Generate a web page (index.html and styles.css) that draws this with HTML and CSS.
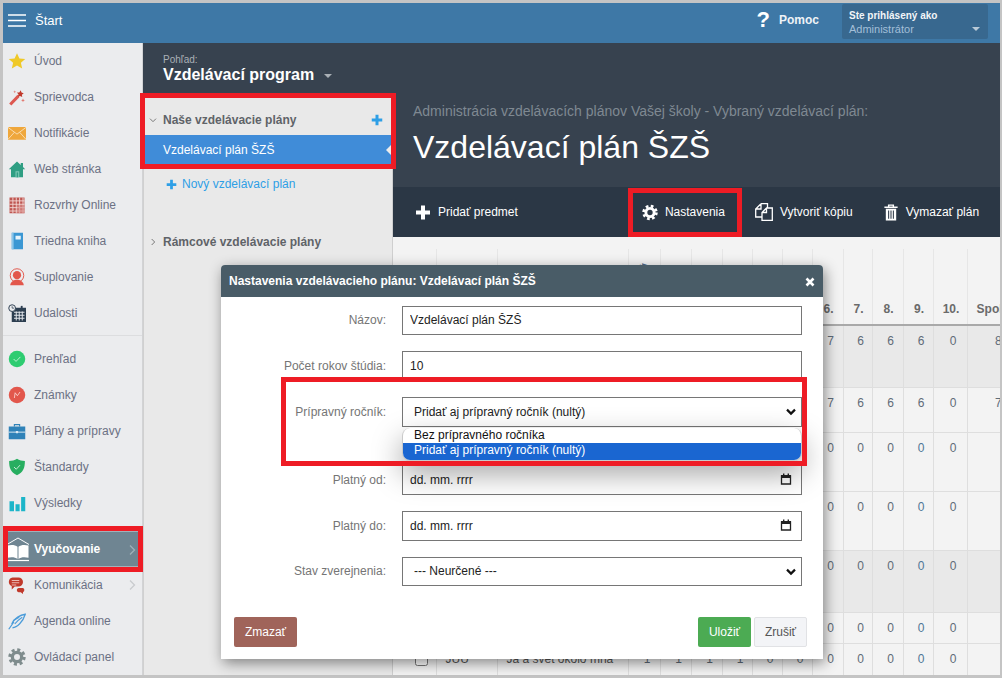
FILE: index.html
```html
<!DOCTYPE html>
<html lang="sk">
<head>
  <meta charset="UTF-8" />
  <meta name="viewport" content="width=device-width, initial-scale=1.0"/>
  <title>Vzdelávací plán ŠZŠ</title>
  <link rel="stylesheet" href="styles.css">
</head>
<body>

<svg class="defs" aria-hidden="true">
  <symbol id="gear" viewBox="0 0 24 24">
    <circle cx="12" cy="12" r="9.6" fill="none" stroke="currentColor" stroke-width="4" stroke-dasharray="4 3.54"/>
    <circle cx="12" cy="12" r="6.2" fill="none" stroke="currentColor" stroke-width="4.4"/>
  </symbol>
  <symbol id="plus" viewBox="0 0 16 16">
    <path d="M6 1h4v5h5v4h-5v5H6v-5H1V6h5z" fill="currentColor"/>
  </symbol>
  <symbol id="chev-right" viewBox="0 0 8 12">
    <path d="M2 1.5 6.5 6 2 10.5" fill="none" stroke="currentColor" stroke-width="1.3"/>
  </symbol>
  <symbol id="chev-down" viewBox="0 0 12 8">
    <path d="M1.5 2 6 6.5 10.5 2" fill="none" stroke="currentColor" stroke-width="1.3"/>
  </symbol>
  <symbol id="select-arrow" viewBox="0 0 10 8">
    <path d="M1 1.6 5 5.6 9 1.6" fill="none" stroke="#111" stroke-width="2.2"/>
  </symbol>
  <symbol id="date-icon" viewBox="0 0 12 12">
    <path d="M1.5 3h9v8h-9z" fill="none" stroke="#222" stroke-width="1.3"/>
    <path d="M1 2h10v3H1zM3 .5h1.4V2H3zM7.6 .5H9V2H7.6z" fill="#222"/>
  </symbol>
</svg>

<div class="shell">
  <header class="topbar">
    <div class="brand">
      <svg class="burger" viewBox="0 0 18 13"><path d="M0 1h18M0 6.5h18M0 12h18" stroke="#fff" stroke-width="1.5"/></svg>
      <span>Štart</span>
    </div>
    <div class="help"><span class="help-mark">?</span><span>Pomoc</span></div>
    <div class="account">
      <div class="account-label">Ste prihlásený ako</div>
      <div class="account-role">Administrátor</div>
      <span class="account-caret"></span>
    </div>
  </header>

  <div class="workspace">
    <nav class="sidebar">
      <ul class="nav-group">
        <li class="nav-item">
          <svg class="nav-icon" viewBox="0 0 24 24"><path d="M12 1.5l3.2 7 7.8.8-5.8 5.1 1.7 7.6-6.900-4-6.900 4 1.700-7.600L1 9.300l7.800-.8z" fill="#efc928"/></svg>
          Úvod
        </li>
        <li class="nav-item">
          <svg class="nav-icon" viewBox="0 0 24 24"><path d="M3 22 14 10.500" stroke="#dd5850" stroke-width="4"/><path d="M17 3l1 3 3 1-2.500 2 .5 3-3-1.500-3 1 1-3-2-2.500 3 0z" fill="#c0392b"/><path d="M20 14l.7 1.800 1.800.7-1.800.7-.7 1.800-.7-1.800-1.800-.7 1.800-.7zM9 3l.5 1.500L11 5l-1.500.5L9 7l-.5-1.500L7 5l1.500-.5z" fill="#e2786f"/></svg>
          Sprievodca
        </li>
        <li class="nav-item">
          <svg class="nav-icon" viewBox="0 0 24 24"><path d="M0 4h24v17H0z" fill="#efa73c"/><path d="M0 4.500l12 9 12-9M0 20.500l8.500-9.500M24 20.500l-8.500-9.500" fill="none" stroke="#fbe6c4" stroke-width="1.100"/></svg>
          Notifikácie
        </li>
        <li class="nav-item">
          <svg class="nav-icon" viewBox="0 0 24 24"><path d="M12 2l5 4.500V4h3v5.200l3 3h-3V23H4V12.200H1z" fill="#2f9e83"/><path d="M10 15h5v8h-5z" fill="#7cc7b4"/><path d="M11.500 16.500h2V23h-2z" fill="#2f9e83"/></svg>
          Web stránka
        </li>
        <li class="nav-item">
          <svg class="nav-icon" viewBox="0 0 24 24"><path d="M2 2h20v21H2z" fill="#bf5651"/><path d="M2 6.500h20M2 11h20M2 15.500h20M2 20h20M6.500 2v21M11 2v21M15.500 2v21M20 2v21" stroke="#f3d9d6" stroke-width="1.200"/><path d="M12 12h10v11H12z" fill="#d9908c" opacity=".6"/></svg>
          Rozvrhy Online
        </li>
        <li class="nav-item">
          <svg class="nav-icon" viewBox="0 0 24 24"><path d="M5 1h15v22H5z" fill="#3b97d3"/><path d="M5 1h2.500v22H5z" fill="#8cc6ea"/><path d="M10 5h7v5h-7z" fill="#e8f4fb"/></svg>
          Triedna kniha
        </li>
        <li class="nav-item">
          <svg class="nav-icon" viewBox="0 0 24 24"><circle cx="12" cy="10" r="9" fill="none" stroke="#e2574c" stroke-width="1.300"/><circle cx="12" cy="9.500" r="5.500" fill="#e2574c"/><path d="M3 23c0-5 5-7.500 9-7.500s9 2.500 9 7.500z" fill="#e2574c"/></svg>
          Suplovanie
        </li>
        <li class="nav-item">
          <svg class="nav-icon" viewBox="0 0 24 24"><path d="M5 5h19v19H5z" fill="#2c3e50"/><path d="M8 11h14M8 15h14M8 19h14M11 10v12M15 10v12M19 10v12" stroke="#e4e8ec" stroke-width="1.300"/><path d="M17 2.500h2.500V6H17z" fill="#2c3e50"/><circle cx="5.500" cy="5.500" r="4.500" fill="#ebecee" stroke="#2c3e50" stroke-width="1.300"/><path d="M5.500 3v2.500H8" fill="none" stroke="#2c3e50"/></svg>
          Udalosti
        </li>
      </ul>
      <ul class="nav-group">
        <li class="nav-item">
          <svg class="nav-icon" viewBox="0 0 24 24"><circle cx="12" cy="12" r="11" fill="#2ecc71"/><path d="M7.500 12l3.200 3.200 5.800-6" fill="none" stroke="#c9f3da" stroke-width="1.200"/></svg>
          Prehľad
        </li>
        <li class="nav-item">
          <svg class="nav-icon" viewBox="0 0 24 24"><circle cx="12" cy="12" r="11" fill="#e2574c"/><path d="M8.500 16l1-7 3 4 3.500-5" fill="none" stroke="#f8cfcb" stroke-width="1.200"/></svg>
          Známky
        </li>
        <li class="nav-item">
          <svg class="nav-icon" viewBox="0 0 24 24"><path d="M1 6h22v17H1z" fill="#2f82b8"/><path d="M8.500 6V3.500h7V6" fill="none" stroke="#2f82b8" stroke-width="1.500"/><path d="M1 13.500h22" stroke="#dbe9f3" stroke-width="1.300"/><path d="M10.500 12h3v3h-3z" fill="#dbe9f3"/></svg>
          Plány a prípravy
        </li>
        <li class="nav-item">
          <svg class="nav-icon" viewBox="0 0 24 24"><path d="M12 1c3 2 7 3 10.500 3 0 9-2 15-10.500 19C3.500 19 1.500 13 1.500 4 5 4 9 3 12 1z" fill="#27ae60"/><path d="M8 12l3 3 5-5.500" fill="none" stroke="#d2f1df" stroke-width="1.200"/></svg>
          Štandardy
        </li>
        <li class="nav-item">
          <svg class="nav-icon" viewBox="0 0 24 24"><path d="M2 9.500h6V23H2zM10 13.500h5.500V23H10zM17.500 4H23v19h-5.500z" fill="#1cb5c9"/></svg>
          Výsledky
        </li>
      </ul>
      <ul class="nav-group">
        <li class="nav-item nav-item-active">
          <svg class="nav-icon nav-icon-book" viewBox="0 0 22 25"><path d="M0 7.500 11 1l11 6.500" fill="none" stroke="#fff" stroke-width="1"/><path d="M.5 8.500c4-1 8-.5 10 1.200V22c-2-1.700-6-2.200-10-1.200zM21.500 8.500c-4-1-8-.5-10 1.200V22c2-1.700 6-2.200 10-1.200z" fill="#fff"/><path d="M0 23.500h22" stroke="#fff" stroke-width="1.200"/></svg>
          Vyučovanie
          <svg class="nav-arrow"><use href="#chev-right"/></svg>
        </li>
        <li class="nav-item">
          <svg class="nav-icon" viewBox="0 0 24 24"><path d="M6 2h8a6 6 0 0 1 0 12H9l-4 4v-4.500A6 6 0 0 1 6 2z" fill="#c0392b"/><path d="M5 6h10M5 9h10M5 12h6" stroke="#f3d3cf" stroke-width="1.100"/><path d="M14 16h6a3 3 0 0 1 0 5.500V24l-3-2.500h-3a2.800 2.800 0 0 1 0-5.500z" fill="#c0392b"/></svg>
          Komunikácia
          <svg class="nav-arrow nav-arrow-muted"><use href="#chev-right"/></svg>
        </li>
        <li class="nav-item">
          <svg class="nav-icon" viewBox="0 0 24 24"><path d="M1 23 8 13M6 21c6 0 14-8 17-18-6 1-15 5-18 13" fill="none" stroke="#4b9cd9" stroke-width="1.700"/><path d="M9 16c3-4 7-7 10-9M8 11c3-2 5-3 7-4" fill="none" stroke="#4b9cd9" stroke-width="1.500"/></svg>
          Agenda online
        </li>
        <li class="nav-item">
          <svg class="nav-icon nav-icon-gear"><use href="#gear"/></svg>
          Ovládací panel
        </li>
      </ul>
    </nav>

    <aside class="plans">
      <div class="plans-head">
        <div class="plans-kicker">Pohľad:</div>
        <div class="plans-view">Vzdelávací program <span class="plans-caret"></span></div>
      </div>
      <div class="plans-body">
        <div class="plans-title">
          <svg class="plans-chev"><use href="#chev-down"/></svg>
          <span>Naše vzdelávacie plány</span>
          <svg class="plans-add"><use href="#plus"/></svg>
        </div>
        <div class="plans-active">Vzdelávací plán ŠZŠ</div>
        <div class="plans-new"><svg class="plans-new-icon"><use href="#plus"/></svg>Nový vzdelávací plán</div>
        <div class="plans-title plans-title-frame">
          <svg class="plans-chev"><use href="#chev-right"/></svg>
          <span>Rámcové vzdelávacie plány</span>
        </div>
      </div>
    </aside>

    <main class="content">
      <div class="content-head">
        <p class="content-sub">Administrácia vzdelávacích plánov Vašej školy - Vybraný vzdelávací plán:</p>
        <h1 class="content-title">Vzdelávací plán ŠZŠ</h1>
      </div>
      <div class="toolbar">
        <div class="tool tool-first"><svg class="tool-icon"><use href="#plus"/></svg>Pridať predmet</div>
        <div class="tool"><svg class="tool-icon"><use href="#gear"/></svg>Nastavenia</div>
        <div class="tool tool-tight">
          <svg class="tool-icon tool-icon-wide" viewBox="0 0 20 18"><path d="M6 .7.7 6v8H7M6 .7h6.500V5M6 .7V6H.7" fill="none" stroke="#fff" stroke-width="1.300"/><path d="M11.500 5 7 9.500v7.800h10.300V5zM11.500 5v4.500H7" fill="none" stroke="#fff" stroke-width="1.300"/></svg>
          Vytvoriť kópiu
        </div>
        <div class="tool">
          <svg class="tool-icon" viewBox="0 0 16 18"><path d="M1 3.500h14M5.500 3V1.200h5V3" fill="none" stroke="#fff" stroke-width="1.500"/><path d="M2.500 5h11v12.500h-11z" fill="#fff"/><path d="M5.500 7v8.500M8 7v8.500M10.500 7v8.500" stroke="#2b3745" stroke-width="1.100"/></svg>
          Vymazať plán
        </div>
      </div>
      <div class="table-wrap">
        <table class="plan-table">
          <colgroup>
            <col class="col-check"><col class="col-code"><col class="col-name">
            <col class="col-32"><col class="col-31"><col class="col-31"><col class="col-30"><col class="col-30"><col class="col-30">
            <col class="col-31"><col class="col-29"><col class="col-31"><col class="col-30"><col class="col-34"><col class="col-sum">
          </colgroup>
          <thead>
            <tr>
              <th></th><th></th><th></th>
              <th><span class="th-rotated">Prípravný</span></th>
              <th>1.</th><th>2.</th><th>3.</th><th>4.</th><th>5.</th>
              <th>6.</th><th>7.</th><th>8.</th><th>9.</th><th>10.</th><th>Spolu</th>
            </tr>
          </thead>
          <tbody>
            <tr class="row-h62 row-dark">
              <td></td><td></td><td></td><td></td><td></td><td></td><td></td><td></td><td></td>
              <td>7</td><td>6</td><td>6</td><td>6</td><td>0</td><td class="cell-sum">8</td>
            </tr>
            <tr class="row-h45">
              <td></td><td></td><td></td><td></td><td></td><td></td><td></td><td></td><td></td>
              <td>7</td><td>6</td><td>6</td><td>6</td><td>0</td><td class="cell-sum">7</td>
            </tr>
            <tr class="row-h59">
              <td></td><td></td><td></td><td></td><td></td><td></td><td></td><td></td><td></td>
              <td>0</td><td>0</td><td>0</td><td class="num-link">0</td><td>0</td><td></td>
            </tr>
            <tr class="row-h59">
              <td></td><td></td><td></td><td></td><td></td><td></td><td></td><td></td><td></td>
              <td>0</td><td>0</td><td>0</td><td class="num-link">0</td><td>0</td><td></td>
            </tr>
            <tr class="row-h62 row-dark">
              <td></td><td></td><td></td><td></td><td></td><td></td><td></td><td></td><td></td>
              <td>0</td><td>0</td><td>0</td><td class="num-link">0</td><td>0</td><td></td>
            </tr>
            <tr class="row-h31">
              <td></td><td></td><td></td><td></td><td></td><td></td><td></td><td></td><td></td>
              <td>0</td><td>0</td><td>0</td><td class="num-link">0</td><td>0</td><td></td>
            </tr>
            <tr class="row-h32">
              <td class="cell-check"><input type="checkbox" class="row-check"></td>
              <td class="cell-text">JUU</td>
              <td class="cell-text">Ja a svet okolo mňa</td>
              <td>1</td><td>1</td><td>1</td><td>1</td><td>0</td><td>0</td>
              <td>0</td><td>0</td><td>0</td><td class="num-link">0</td><td>0</td><td></td>
            </tr>
          </tbody>
        </table>
      </div>
    </main>
  </div>

  <!-- Settings dialog -->
  <section class="modal">
    <div class="modal-head">
      <span>Nastavenia vzdelávacieho plánu: Vzdelávací plán ŠZŠ</span>
      <svg class="modal-close" viewBox="0 0 10 10"><path d="M1.500 1.500l7 7M8.500 1.500l-7 7" stroke="#fff" stroke-width="2.600"/></svg>
    </div>
    <form class="modal-form">
      <label class="form-label" for="plan-name">Názov:</label>
      <input class="form-field" id="plan-name" type="text" value="Vzdelávací plán ŠZŠ">

      <label class="form-label" for="plan-years">Počet rokov štúdia:</label>
      <input class="form-field" id="plan-years" type="text" value="10">

      <label class="form-label" for="plan-prep">Prípravný ročník:</label>
      <div class="field-box">
        <select class="form-field form-select" id="plan-prep">
          <option>Pridať aj prípravný ročník (nultý)</option>
        </select>
        <svg class="field-icon field-icon-select"><use href="#select-arrow"/></svg>
        <div class="select-popup">
          <div class="select-option">Bez prípravného ročníka</div>
          <div class="select-option select-option-on">Pridať aj prípravný ročník (nultý)</div>
        </div>
      </div>

      <div class="form-spacer"></div>

      <label class="form-label" for="plan-from">Platný od:</label>
      <div class="field-box">
        <input class="form-field" id="plan-from" type="text" value="dd. mm. rrrr">
        <svg class="field-icon"><use href="#date-icon"/></svg>
      </div>

      <label class="form-label" for="plan-to">Platný do:</label>
      <div class="field-box">
        <input class="form-field" id="plan-to" type="text" value="dd. mm. rrrr">
        <svg class="field-icon"><use href="#date-icon"/></svg>
      </div>

      <label class="form-label" for="plan-state">Stav zverejnenia:</label>
      <div class="field-box">
        <select class="form-field form-select" id="plan-state">
          <option>--- Neurčené ---</option>
        </select>
        <svg class="field-icon field-icon-select"><use href="#select-arrow"/></svg>
      </div>
    </form>
    <div class="modal-foot">
      <button class="btn btn-delete" type="button">Zmazať</button>
      <div class="modal-actions">
        <button class="btn btn-save" type="button">Uložiť</button>
        <button class="btn btn-cancel" type="button">Zrušiť</button>
      </div>
    </div>
  </section>

  <!-- Red annotation frames drawn over the screenshot -->
  <div class="mark mark-plans"></div>
  <div class="mark mark-settings"></div>
  <div class="mark mark-nav"></div>
  <div class="mark mark-select"></div>
</div>

</body>
</html>
```

FILE: styles.css
```css
* { box-sizing: border-box; }

html, body {
  margin: 0;
  height: 678px;
  overflow: hidden;
}

body {
  font-family: "Liberation Sans", Arial, sans-serif;
  font-size: 12px;
  background: #c4c4c4;
}

.defs {
  position: absolute;
  width: 0;
  height: 0;
}

.shell {
  position: relative;
  width: 1002px;
  height: 678px;
  padding: 3px 2px 3px 3px;
  display: flex;
  flex-direction: column;
}

/* top bar */
.topbar {
  height: 40px;
  flex: none;
  display: flex;
  align-items: center;
  padding-bottom: 6px;
  background: #3e78a6;
  color: #fff;
}

.brand {
  display: flex;
  align-items: center;
  gap: 9px;
  padding-left: 5px;
  font-size: 13px;
  margin-right: auto;
}

.burger {
  width: 18px;
  height: 13px;
}

.help {
  display: flex;
  align-items: center;
  gap: 9px;
  font-weight: bold;
  margin-right: 23px;
  color: #eef3f7;
}

.help-mark {
  font-size: 22px;
  color: #fff;
}

.account {
  position: relative;
  width: 146px;
  height: 35px;
  margin: 3px 12px 0 0;
  padding: 5px 7px;
  background: #38688f;
  border-radius: 2px;
}

.account-label {
  font-size: 10px;
  font-weight: bold;
  line-height: 13px;
  color: #f2f5f8;
}

.account-role {
  font-size: 11px;
  line-height: 15px;
  color: #a3bfd8;
}

.account-caret {
  position: absolute;
  right: 8px;
  bottom: 8px;
  border: 4px solid transparent;
  border-top: 4px solid #b9cad8;
  border-bottom: 0;
}

/* left navigation */
.workspace {
  flex: 1;
  min-height: 0;
  display: flex;
}

.sidebar {
  width: 140px;
  flex: none;
  background: #ebecee;
  border-right: 1px solid #d2d3d5;
}

.nav-group {
  list-style: none;
  margin: 0;
  padding: 0;
}

.nav-group + .nav-group {
  margin-top: 4px;
  padding-top: 5px;
  border-top: 1px solid #dcdddf;
}

.nav-group:last-child {
  margin-top: 10px;
  padding-top: 0;
  border-top: 0;
}

.nav-item {
  position: relative;
  height: 36px;
  display: flex;
  align-items: center;
  gap: 8px;
  padding-left: 5px;
  color: #6b7184;
}

.nav-icon {
  width: 18px;
  height: 18px;
  flex: none;
}

.nav-icon-gear {
  color: #7f8c8d;
}

.nav-item-active {
  font-weight: bold;
  color: #fff;
  background: #6f8592;
  border-top: 1px solid #a2b1ba;
  border-bottom: 1px solid #a2b1ba;
}

.nav-icon-book {
  width: 22px;
  height: 25px;
  margin: 0 -3px 0 -1px;
}

.nav-arrow {
  position: absolute;
  right: 6px;
  top: 12px;
  width: 8px;
  height: 12px;
  color: #9fb0ba;
}

.nav-arrow-muted {
  color: #c9cbce;
}

/* plans column */
.plans {
  width: 250px;
  flex: none;
  display: flex;
  flex-direction: column;
}

.plans-head {
  height: 52px;
  flex: none;
  padding: 12px 0 0 20px;
  background: #37424f;
  color: #fff;
}

.plans-kicker {
  font-size: 10px;
  line-height: 10px;
  color: #aab0b6;
}

.plans-view {
  font-size: 16px;
  font-weight: bold;
  line-height: 20px;
}

.plans-caret {
  display: inline-block;
  margin: 0 0 2px 5px;
  border: 4px solid transparent;
  border-top: 4px solid #a9afb5;
  border-bottom: 0;
}

.plans-body {
  flex: 1;
  background: #e9e9e9;
  border-left: 1px solid #d0d0d0;
  border-right: 1px solid #cfcfcf;
  padding-top: 12px;
}

.plans-title {
  display: flex;
  align-items: center;
  height: 24px;
  padding: 1px 9px 0 5px;
  font-weight: bold;
  color: #5f6368;
}

.plans-title-frame {
  margin-top: 35px;
}

.plans-chev {
  width: 8px;
  height: 8px;
  margin-right: 6px;
  color: #666;
}

.plans-add {
  width: 12px;
  height: 12px;
  margin-left: auto;
  color: #2e9fe6;
}

.plans-active {
  position: relative;
  height: 29px;
  margin-top: 4px;
  padding: 1px 0 0 19px;
  line-height: 29px;
  background: #408cd8;
  color: #fff;
}

/* small notch pointing at the content */
.plans-active::after {
  content: "";
  position: absolute;
  right: 0;
  top: 9px;
  border: 6px solid transparent;
  border-right: 6px solid #ececec;
  border-left: 0;
}

.plans-new {
  display: flex;
  align-items: center;
  height: 20px;
  margin-top: 10px;
  padding-left: 22px;
  color: #2e9fe6;
}

.plans-new-icon {
  width: 11px;
  height: 11px;
  margin-right: 5px;
}

/* main column */
.content {
  flex: 1;
  min-width: 0;
  display: flex;
  flex-direction: column;
  background: #f3f3f3;
}

.content-head {
  height: 144px;
  flex: none;
  padding: 60px 0 0 20px;
  background: #37424f;
}

.content-sub {
  margin: 0;
  font-size: 14px;
  line-height: 16px;
  color: #7f8992;
}

.content-title {
  margin: 8px 0 0;
  font-size: 32px;
  font-weight: normal;
  line-height: 40px;
  color: #fff;
}

.toolbar {
  height: 50px;
  flex: none;
  display: flex;
  align-items: center;
  background: #2b3745;
  color: #fff;
  padding-left: 7px;
}

.tool {
  display: flex;
  align-items: center;
  gap: 7px;
  padding: 0 15px;
}

.tool-first {
  margin-right: 94px;
}

.tool-tight {
  gap: 5px;
}

.tool-icon {
  width: 16px;
  height: 17px;
}

.tool-icon-wide {
  width: 20px;
  height: 18px;
}

/* plan table */
.table-wrap {
  flex: 1;
  min-height: 0;
  overflow: hidden;
  padding-top: 12px;
}

.plan-table {
  width: 624px;
  table-layout: fixed;
  border-collapse: collapse;
  color: #5f6b78;
}

.col-check { width: 43px; }
.col-code { width: 61px; }
.col-name { width: 131px; }
.col-32 { width: 32px; }
.col-34 { width: 34px; }
.col-31 { width: 31px; }
.col-30 { width: 30px; }
.col-29 { width: 29px; }
.col-sum { width: 50px; }

.plan-table th {
  height: 76px;
  padding: 0 0 8px 2px;
  vertical-align: bottom;
  font-weight: bold;
  border-left: 1px solid #e6e6e6;
  border-bottom: 2px solid #a9a9a9;
  color: #6a6a6a;
  white-space: nowrap;
}

.plan-table th:first-child,
.plan-table td:first-child {
  border-left: 0;
}

.th-rotated {
  display: inline-block;
  margin-bottom: -5px;
  writing-mode: vertical-rl;
  transform: rotate(180deg);
  color: #4f6b8a;
}

.plan-table td {
  padding: 8px 0 0 6px;
  vertical-align: top;
  text-align: center;
  border-left: 1px solid #dedede;
  border-bottom: 1px solid #dedede;
}

.plan-table td.cell-sum {
  padding-left: 12px;
}

.plan-table td.cell-text {
  padding-left: 9px;
  text-align: left;
  color: #555;
}

.plan-table td.cell-check {
  padding: 4px 0 0 14px;
  vertical-align: middle;
}

.row-h45 { height: 45px; }
.row-h59 { height: 59px; }
.row-h62 { height: 62px; }
.row-h31 { height: 31px; }
.row-h32 { height: 32px; }

.row-dark { background: #e9e9e9; }

.num-link { color: #4f7696; }

.row-check {
  width: 13px;
  height: 13px;
  margin: 0;
}

/* dialog */
.modal {
  position: absolute;
  left: 221px;
  top: 265px;
  width: 602px;
  height: 394px;
  background: #fff;
  border-radius: 4px 4px 0 0;
  box-shadow: 2px 4px 14px rgba(0, 0, 0, 0.45);
  display: flex;
  flex-direction: column;
}

.modal-head {
  height: 32px;
  flex: none;
  display: flex;
  align-items: center;
  justify-content: space-between;
  padding: 0 8px;
  background: #495c67;
  border-radius: 4px 4px 0 0;
  color: #fff;
  font-weight: bold;
}

.modal-close {
  width: 10px;
  height: 10px;
  margin-top: 2px;
}

.modal-form {
  display: grid;
  grid-template-columns: 165px 400px;
  grid-template-rows: repeat(3, 29.66px) 6.67px repeat(3, 29.66px);
  column-gap: 16px;
  row-gap: 16px;
  align-items: center;
  padding-top: 8.67px;
}

/* room left free for the open select list */
.form-spacer {
  grid-column: 1 / -1;
}

.form-label {
  text-align: right;
  color: #757575;
}

.field-box {
  position: relative;
  height: 100%;
}

.form-field {
  display: block;
  width: 100%;
  height: 100%;
  padding: 0 7px;
  border: 1px solid #767676;
  border-radius: 0;
  background: #fff;
  font: 12px "Liberation Sans", Arial, sans-serif;
  color: #222;
  outline: none;
}

.form-select {
  appearance: none;
  padding-left: 11px;
}

.field-icon {
  position: absolute;
  right: 10px;
  top: 8px;
  width: 12px;
  height: 12px;
  pointer-events: none;
}

.field-icon-select {
  right: 6px;
  top: 11px;
  width: 10px;
  height: 8px;
}

.select-popup {
  position: absolute;
  left: 0;
  top: 100%;
  width: 100%;
  height: 33px;
  margin-top: 1px;
  overflow: hidden;
  background: #fff;
  border: 1px solid #c9c9c9;
  border-top: 0;
  border-radius: 8px;
  box-shadow: 0 12px 30px rgba(0, 0, 0, 0.38);
  z-index: 2;
}

.select-option {
  height: 15px;
  padding-left: 11px;
  line-height: 15px;
  color: #111;
}

.select-option-on {
  height: 17px;
  line-height: 14px;
  background: #1a66d1;
  color: #fff;
}

.modal-foot {
  display: flex;
  justify-content: space-between;
  padding: 0 16px 12px 13px;
  margin-top: auto;
}

.modal-actions {
  display: flex;
  gap: 3px;
}

.btn {
  width: 53px;
  height: 30px;
  padding: 0;
  border: 1px solid transparent;
  border-radius: 2px;
  font: 12px "Liberation Sans", Arial, sans-serif;
}

.btn-delete {
  width: 63px;
  background: #a0645a;
  color: #fff;
}

.btn-save {
  background: #4cab53;
  color: #fff;
}

.btn-cancel {
  background: #f3f4f7;
  border-color: #e1e2e5;
  color: #555;
}

/* red annotation frames */
.mark {
  position: absolute;
  border: 5px solid #ee1c25;
  z-index: 5;
  pointer-events: none;
}

.mark-plans { left: 140px; top: 93px; width: 256px; height: 76px; }
.mark-settings { left: 628px; top: 188px; width: 114px; height: 49px; }
.mark-nav { left: 3px; top: 526px; width: 140px; height: 46px; }
.mark-select { left: 281px; top: 377px; width: 526px; height: 89px; }
```
